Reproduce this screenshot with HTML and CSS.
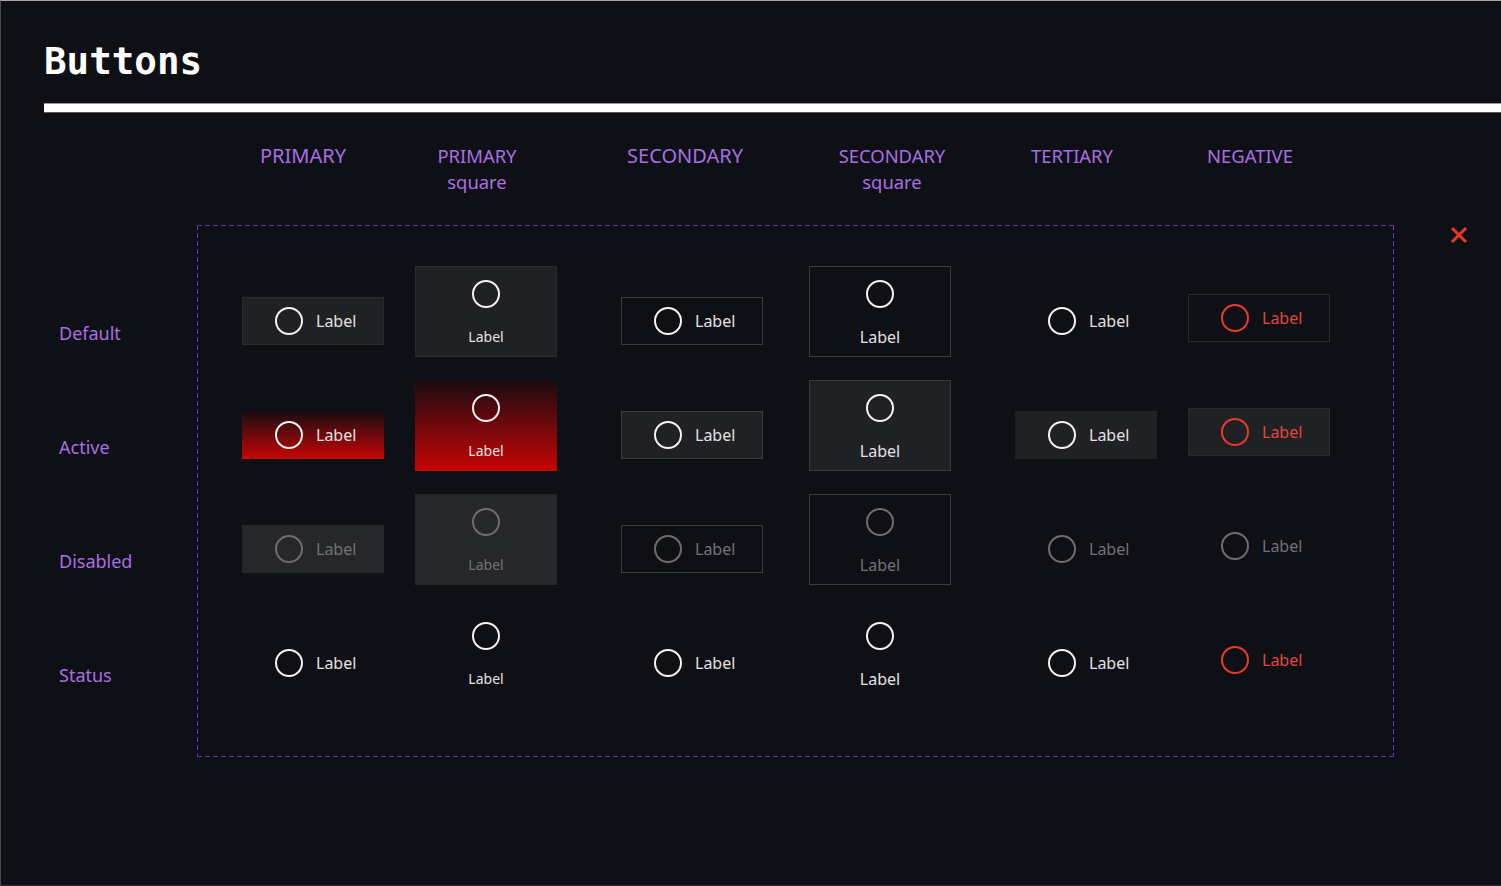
FILE: index.html
```html
<!DOCTYPE html>
<html lang="en">
<head>
    <meta charset="UTF-8">
    <meta name="viewport" content="width=device-width, initial-scale=1.0">
    <title>Buttons</title>
    <link rel="stylesheet" href="styles.css">
</head>
<body>

<div class="page">
  <h1 class="title">Buttons</h1>
  <div class="rule"></div>

  <div class="col-heads">
    <div>PRIMARY</div>
    <div class="sub">PRIMARY<br>square</div>
    <div>SECONDARY</div>
    <div class="sub">SECONDARY<br>square</div>
    <div class="sub">TERTIARY</div>
    <div class="sub">NEGATIVE</div>
  </div>

  <div class="sheet">
    <div class="row-labels">
      <div class="row-label">Default</div>
      <div class="row-label">Active</div>
      <div class="row-label">Disabled</div>
      <div class="row-label">Status</div>
    </div>

    <div class="board">
      <!-- default -->
      <div class="btn wide primary"><span class="icon"></span><span class="text">Label</span></div>
      <div class="btn square primary small"><span class="icon"></span><span class="text">Label</span></div>
      <div class="btn wide secondary"><span class="icon"></span><span class="text">Label</span></div>
      <div class="btn square secondary"><span class="icon"></span><span class="text">Label</span></div>
      <div class="btn wide"><span class="icon"></span><span class="text">Label</span></div>
      <div class="btn wide negative outline"><span class="icon"></span><span class="text">Label</span></div>

      <!-- active -->
      <div class="btn wide hot"><span class="icon"></span><span class="text">Label</span></div>
      <div class="btn square hot small"><span class="icon"></span><span class="text">Label</span></div>
      <div class="btn wide secondary filled"><span class="icon"></span><span class="text">Label</span></div>
      <div class="btn square secondary filled"><span class="icon"></span><span class="text">Label</span></div>
      <div class="btn wide filled-plain"><span class="icon"></span><span class="text">Label</span></div>
      <div class="btn wide negative outline filled"><span class="icon"></span><span class="text">Label</span></div>

      <!-- disabled -->
      <div class="btn wide muted-fill disabled"><span class="icon"></span><span class="text">Label</span></div>
      <div class="btn square muted-fill disabled small"><span class="icon"></span><span class="text">Label</span></div>
      <div class="btn wide secondary disabled"><span class="icon"></span><span class="text">Label</span></div>
      <div class="btn square secondary disabled"><span class="icon"></span><span class="text">Label</span></div>
      <div class="btn wide disabled"><span class="icon"></span><span class="text">Label</span></div>
      <div class="btn wide negative disabled"><span class="icon"></span><span class="text">Label</span></div>

      <!-- status -->
      <div class="btn wide"><span class="icon"></span><span class="text">Label</span></div>
      <div class="btn square small"><span class="icon"></span><span class="text">Label</span></div>
      <div class="btn wide"><span class="icon"></span><span class="text">Label</span></div>
      <div class="btn square"><span class="icon"></span><span class="text">Label</span></div>
      <div class="btn wide"><span class="icon"></span><span class="text">Label</span></div>
      <div class="btn wide negative"><span class="icon"></span><span class="text">Label</span></div>
    </div>

    <div class="close">
      <svg width="18" height="18" viewBox="0 0 18 18">
        <path d="M2 2 L16 16 M16 2 L2 16" stroke="#e9382b" stroke-width="3" fill="none"/>
      </svg>
    </div>
  </div>
</div>

</body>
</html>
```

FILE: styles.css
```css
body {
    margin: 0;
    padding: 0;
    background: #0f1015;
    font-family: "Noto Sans", "Open Sans", sans-serif;
}
.page {
    height: 886px;
    box-sizing: border-box;
    border-top: 1px solid #a9a9a9;
    border-left: 1px solid #4a4a4a;
    border-bottom: 1px solid #2c2c2c;
    overflow: hidden;
}
.title {
    margin: 0;
    padding: 38px 0 0 43px;
    font-family: "DejaVu Sans Mono", monospace;
    font-weight: bold;
    font-size: 37.5px;
    line-height: 44px;
    color: #fff;
}
.rule {
    margin: 20px 0 0 43px;
    height: 8px;
    background: #fff;
    border-top: 1px solid #9a9a9a;
    border-bottom: 1px solid #5a5a5a;
}
.col-heads {
    display: grid;
    grid-template-columns: 140px 208px 208px 206px 154px 202px;
    margin: 30px 0 0 232px;
    color: #a86fe3;
    font-size: 20px;
    line-height: 26px;
    text-align: center;
}
.col-heads .sub {
    font-size: 18.4px;
}
.sheet {
    display: flex;
    align-items: flex-start;
    margin-top: 30px;
    padding-left: 58px;
}
.row-labels {
    width: 138px;
    flex: none;
    padding-top: 96px;
    color: #a86fe3;
    font-size: 18px;
}
.row-label {
    height: 114px;
    line-height: 24px;
}
/* dashed frame drawn with gradients so the dashes come out longer */
.board {
    box-sizing: border-box;
    width: 1197px;
    flex: none;
    padding: 41px 0 58px 45px;
    background:
        repeating-linear-gradient(90deg, #5c2fa8 0 5px, transparent 5px 8px) top / 100% 1px no-repeat,
        repeating-linear-gradient(90deg, #5c2fa8 0 5px, transparent 5px 8px) bottom / 100% 1px no-repeat,
        repeating-linear-gradient(180deg, #6632bd 0 5px, transparent 5px 8px) left / 1px 100% no-repeat,
        repeating-linear-gradient(180deg, #7237d2 0 5px, transparent 5px 8px) right / 1px 100% no-repeat;
    display: grid;
    grid-template-columns: 173px 206px 188px 206px 173px 142px;
    grid-template-rows: repeat(4, 91px);
    row-gap: 23px;
}
.close {
    margin: 1px 0 0 56px;
    width: 18px;
    height: 18px;
}
.close svg {
    display: block;
}

/* buttons */
.btn {
    box-sizing: border-box;
    width: 142px;
    display: flex;
    border: 1px solid transparent;
    color: #e2e2e2;
}
.icon {
    box-sizing: border-box;
    width: 28px;
    height: 28px;
    flex: none;
    border: 2px solid #f3f3f3;
    border-radius: 50%;
}
.text {
    line-height: 20px;
}
.wide {
    height: 48px;
    margin-top: 31px;
    align-items: center;
    padding-left: 32px;
    gap: 13px;
    font-size: 16px;
}
.square {
    height: 91px;
    flex-direction: column;
    align-items: center;
    padding-top: 13px;
    font-size: 16px;
}
.square .text {
    margin-top: 19px;
}
.square.small {
    font-size: 14px;
}

.primary {
    background: #202124;
    border-color: #2a2b2e;
}
.secondary {
    border-color: #3a3b3f;
}
.secondary.filled {
    background: #202124;
}
.filled-plain {
    background: #202124;
}
.hot {
    background: linear-gradient(to bottom, #170c11, #c70506);
    background-origin: border-box;
}
.muted-fill {
    background: #26272b;
}

.negative {
    margin-top: 28px;
    color: #e0483c;
}
.negative .icon {
    border-color: #ea3a2d;
}
.negative.outline {
    border-color: #2a2b2e;
}
.negative.filled {
    background: #202124;
}

.disabled,
.negative.disabled {
    color: #727275;
}
.disabled .icon,
.negative.disabled .icon {
    border-color: #6d6d70;
}
```
